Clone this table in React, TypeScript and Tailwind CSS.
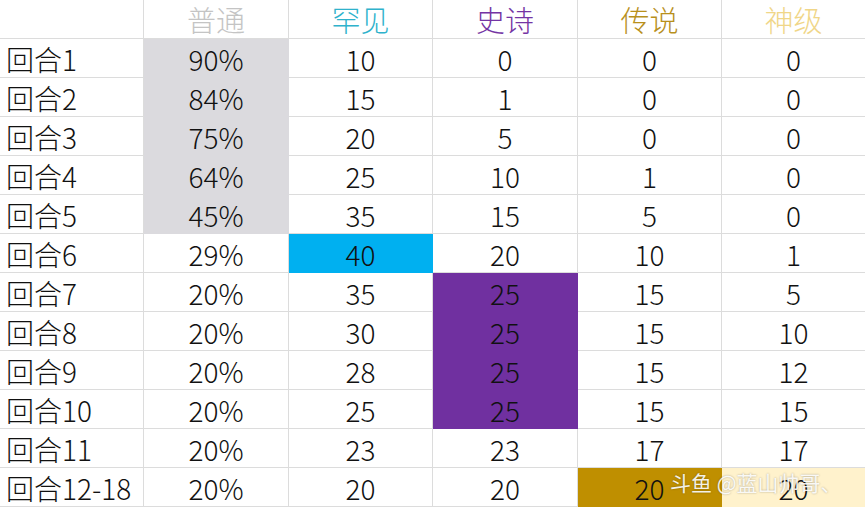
import React from 'react';

type Cell = { v: string; bg?: string };

const headers = [
  { label: '普通', color: 'text-[#c4c4c4]' },
  { label: '罕见', color: 'text-[#2fb2cc]' },
  { label: '史诗', color: 'text-[#7434a4]' },
  { label: '传说', color: 'text-[#b8901c]' },
  { label: '神级', color: 'text-[#f0d688]' },
];

const gray = 'bg-[#dbdade]';
const cyan = 'bg-[#00b0f0]';
const purple = 'bg-[#7030a0]';
const gold = 'bg-[#bf8f00]';
const cream = 'bg-[#fff2cc]';

const rows: { name: string; cells: Cell[] }[] = [
  { name: '回合1', cells: [{ v: '90%', bg: gray }, { v: '10' }, { v: '0' }, { v: '0' }, { v: '0' }] },
  { name: '回合2', cells: [{ v: '84%', bg: gray }, { v: '15' }, { v: '1' }, { v: '0' }, { v: '0' }] },
  { name: '回合3', cells: [{ v: '75%', bg: gray }, { v: '20' }, { v: '5' }, { v: '0' }, { v: '0' }] },
  { name: '回合4', cells: [{ v: '64%', bg: gray }, { v: '25' }, { v: '10' }, { v: '1' }, { v: '0' }] },
  { name: '回合5', cells: [{ v: '45%', bg: gray }, { v: '35' }, { v: '15' }, { v: '5' }, { v: '0' }] },
  { name: '回合6', cells: [{ v: '29%' }, { v: '40', bg: cyan }, { v: '20' }, { v: '10' }, { v: '1' }] },
  { name: '回合7', cells: [{ v: '20%' }, { v: '35' }, { v: '25', bg: purple }, { v: '15' }, { v: '5' }] },
  { name: '回合8', cells: [{ v: '20%' }, { v: '30' }, { v: '25', bg: purple }, { v: '15' }, { v: '10' }] },
  { name: '回合9', cells: [{ v: '20%' }, { v: '28' }, { v: '25', bg: purple }, { v: '15' }, { v: '12' }] },
  { name: '回合10', cells: [{ v: '20%' }, { v: '25' }, { v: '25', bg: purple }, { v: '15' }, { v: '15' }] },
  { name: '回合11', cells: [{ v: '20%' }, { v: '23' }, { v: '23' }, { v: '17' }, { v: '17' }] },
  { name: '回合12-18', cells: [{ v: '20%' }, { v: '20' }, { v: '20' }, { v: '20', bg: gold }, { v: '20', bg: cream }] },
];

const grid = 'grid grid-cols-[144px_145px_144px_145px_144px_144px]';

const App: React.FC = () => {
  return (
    <div
      className="relative w-[865px] h-[508px] overflow-hidden bg-white text-[#111] text-[28px] font-light leading-[34px]"
      style={{ fontFamily: '"Noto Sans CJK SC", "Liberation Sans", sans-serif' }}
    >
      {/* header row */}
      <div className={`${grid} h-[39px]`}>
        <div className="border-r border-b border-[#dcdcdc]" />
        {headers.map((h) => (
          <div
            key={h.label}
            className={`flex items-center justify-center border-r border-b border-[#dcdcdc] text-[29px] ${h.color}`}
          >
            {h.label}
          </div>
        ))}
      </div>

      {rows.map((r) => (
        <div key={r.name} className={`${grid} h-[39px]`}>
          <div className="flex items-center pl-[6px] pt-[2px] border-r border-b border-[#dcdcdc] whitespace-nowrap">
            {r.name}
          </div>
          {r.cells.map((c, i) => (
            <div
              key={i}
              className={`flex items-center justify-center pt-[2px] border-r border-b ${
                c.bg ? `${c.bg} border-transparent` : 'border-[#dcdcdc]'
              }`}
            >
              {c.v}
            </div>
          ))}
        </div>
      ))}

      {/* watermark */}
      <div className="absolute left-[670px] top-[472px] text-[21px] leading-none font-normal text-white/90 whitespace-nowrap [text-shadow:0_0_2px_rgba(0,0,0,0.35)]">
        斗鱼 @蓝山帅哥、
      </div>
    </div>
  );
};

export default App;
